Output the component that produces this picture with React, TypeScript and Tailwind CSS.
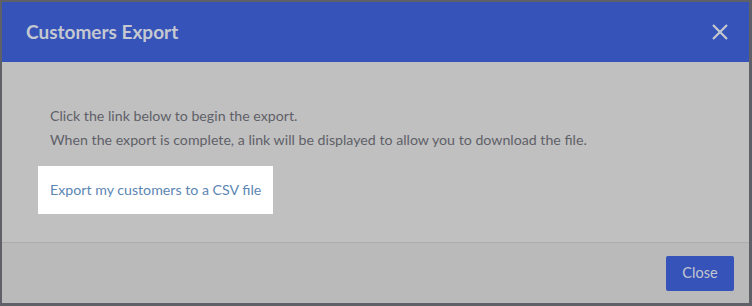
export default function App() {
  return (
    <div
      className="w-[752px] h-[306px] bg-[#5f6068] pt-[2px] pl-[2px] pr-[3px] pb-[3px]"
      style={{ fontFamily: '"Source Sans Pro", Lato, "Open Sans", sans-serif' }}
    >
      <div className="flex h-full flex-col bg-[#c0c0c0]">
        <div className="flex h-[60px] items-center justify-between bg-[#3653b9] pl-6 pr-5">
          <h2 className="text-[19px] font-bold text-[#c4c8d0]">Customers Export</h2>
          <button type="button" aria-label="Close" className="text-[#c4c8d0]">
            <svg width="18" height="18" viewBox="0 0 18 18" stroke="currentColor" strokeWidth="2.2">
              <path d="M2 2L16 16M16 2L2 16" />
            </svg>
          </button>
        </div>

        <div className="flex-1 border-b border-[#acadac] pl-9 pt-[42px]">
          <p className="pl-3 text-[14.2px] leading-6 text-[#5f6068]">
            Click the link below to begin the export.
            <br />
            When the export is complete, a link will be displayed to allow you to download the file.
          </p>
          <div className="mt-[14px] inline-block bg-white px-3 py-[12px] text-[14.2px] leading-6 text-[#5b86b3]">
            Export my customers to a CSV file
          </div>
        </div>

        <div className="flex h-[60px] items-center justify-end bg-[#b9bab9] pr-[15px]">
          <button
            type="button"
            className="h-[35px] w-[68px] rounded-[2px] bg-[#3653b9] text-[14.5px] text-[#c4c8d0]"
          >
            Close
          </button>
        </div>
      </div>
    </div>
  );
}
